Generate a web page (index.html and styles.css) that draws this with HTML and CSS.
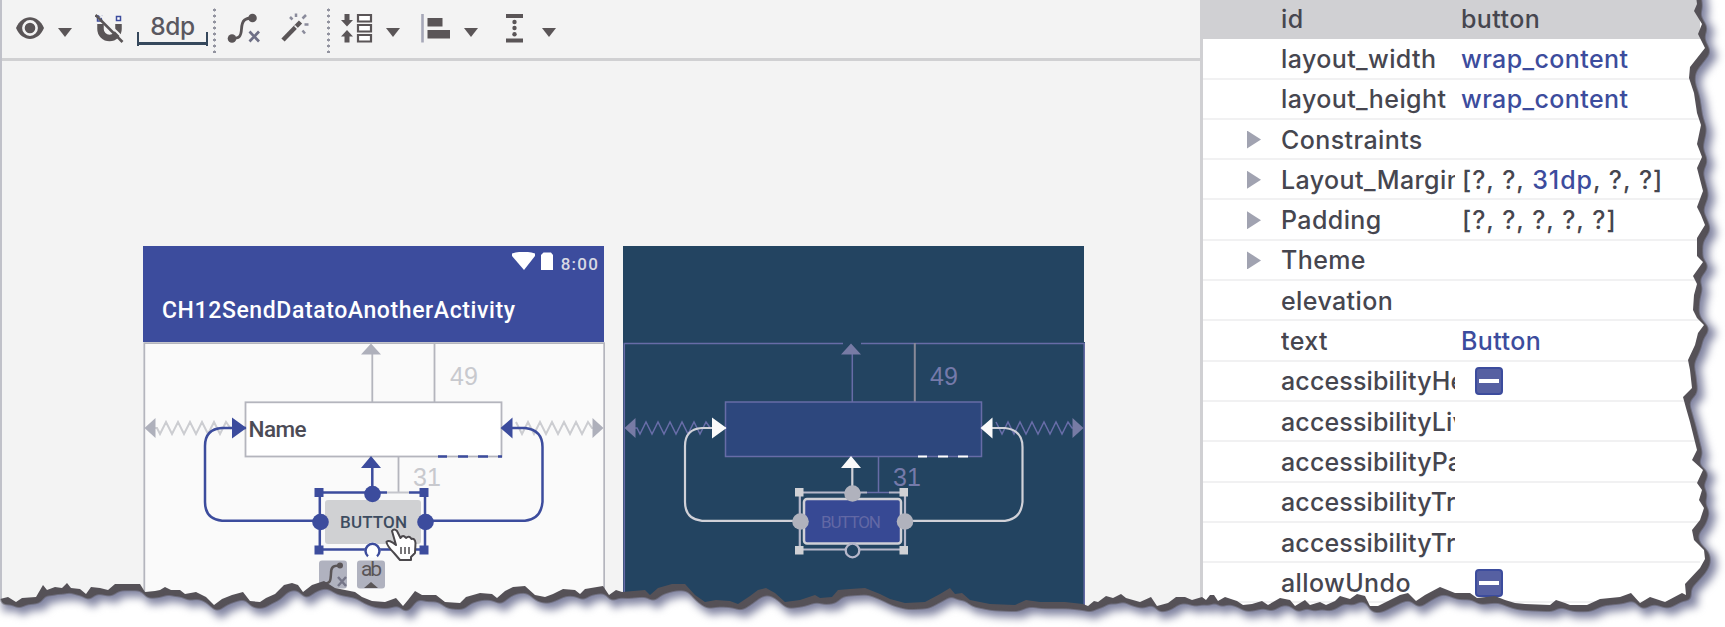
FILE: index.html
```html
<!DOCTYPE html>
<html lang="en">
<head>
<meta charset="utf-8">
<title>Layout Editor</title>
<link rel="stylesheet" href="styles.css">
</head>
<body>
<div class="app">
  <main class="editor">
    <div class="toolbar">
      <svg class="ic eye" width="28" height="24" viewBox="16 16 28 24"><path d="M16 28C22 13.500 38 13.500 44 28C38 42.500 22 42.500 16 28Z" fill="#5a5557"/><circle cx="30" cy="28" r="6.600" fill="none" stroke="#f3f3f3" stroke-width="2.600"/><circle cx="30" cy="28" r="3.800" fill="#5a5557"/></svg>
      <svg class="ic dd dd-eye" width="14" height="9" viewBox="0 0 14 9"><path d="M0 0H14L7 9Z"/></svg>
      <svg class="ic magnet" width="29" height="29" viewBox="95 14 29 29"><path d="M100.500 24V29A9 9 0 0 0 118.500 29V24" fill="none" stroke="#5a5557" stroke-width="6.500"/><path d="M97.500 16h4v5h-4zM116.500 16.500h4v4h-4z" fill="#fff" stroke="#3c4c9d" stroke-width="1.500"/><path d="M97 12L125 40" stroke="#f3f3f3" stroke-width="2"/><path d="M95.500 15L122.500 42" stroke="#5a5557" stroke-width="2.600"/></svg>
      <div class="dp"><span>8dp</span></div>
      <i class="dots"></i>
      <svg class="ic curve" width="34" height="30" viewBox="227 13 34 30"><path d="M232 38.500C239 38.500 241 37 241.500 29C242 20 245 18 253 18" fill="none" stroke="#5a5557" stroke-width="2.800"/><circle cx="232" cy="38.500" r="4.300" fill="#5a5557"/><circle cx="252.500" cy="18" r="4.300" fill="#5a5557"/><path d="M249.500 31.500L259 41.500M259 31.500L249.500 41.500" stroke="#6f7086" stroke-width="2.700"/></svg>
      <svg class="ic wand" width="30" height="30" viewBox="280 13 30 30"><path d="M283 40L300.500 22" stroke="#5a5557" stroke-width="4.500"/><path d="M294.500 25.500L298 29" stroke="#f3f3f3" stroke-width="1.500"/><path d="M290 17l2.500 2.500M296 13.500v3.500M306 15l-3.500 3.500M304.500 24.500h4M302.500 30.500l2.500 3" stroke="#8a8b9b" stroke-width="2.500"/></svg>
      <i class="dots dots-2"></i>
      <svg class="ic stack" width="32" height="30" viewBox="341 13 32 30"><path d="M344.500 14h5v6h3.500l-6 6.500-6-6.500h3.500zM344.500 42.500h5v-6h3.500l-6-6.500-6 6.500h3.500z" fill="#5a5557"/><path d="M358 15h13v6.500h-13zM358 25h13v6.500h-13zM358 35h13v6.500h-13z" fill="#fff" stroke="#5a5557" stroke-width="2.200"/></svg>
      <svg class="ic dd dd-a" width="14" height="9" viewBox="0 0 14 9"><path d="M0 0H14L7 9Z"/></svg>
      <svg class="ic align" width="29" height="29" viewBox="421 14 29 29"><path d="M422.500 14v28.500" stroke="#a6a8b8" stroke-width="2.600"/><path d="M427.500 18h15v8.500h-15zM427.500 30h22.500v8.500h-22.500z" fill="#5a5557"/></svg>
      <svg class="ic dd dd-b" width="14" height="9" viewBox="0 0 14 9"><path d="M0 0H14L7 9Z"/></svg>
      <svg class="ic guide" width="18" height="29" viewBox="506 14 18 29"><path d="M506 16h17M506 40.500h17" stroke="#5a5557" stroke-width="4"/><g fill="#5a5557"><circle cx="514.500" cy="22" r="2.200"/><circle cx="514.500" cy="28" r="2.200"/><circle cx="514.500" cy="34.200" r="2.200"/></g></svg>
      <svg class="ic dd dd-c" width="14" height="9" viewBox="0 0 14 9"><path d="M0 0H14L7 9Z"/></svg>
    </div>
    <div class="canvas">
      <section class="screen">
        <header class="appbar">
          <div class="status">
            <svg width="42" height="19" viewBox="512 252 42 19"><path d="M512 253.500Q523.500 250 535 253.500V256L524 270L512 256Z" fill="#fff"/><path d="M541 270V255L543.500 252.500H551L553 255V270Z" fill="#fff"/></svg>
            <span>8:00</span>
          </div>
          <h1>CH12SendDatatoAnotherActivity</h1>
        </header>
        <svg class="surface" width="462" height="285" viewBox="143 342 462 285">
          <rect x="143" y="342" width="462" height="285" fill="#fafafa"/>
          <g fill="none" stroke="#b4b5bd" stroke-width="1.800">
            <path d="M144.300 627V343.200H604.200V627"/>
            <path d="M372.300 350V402M434.500 343V402M398.500 457V492"/>
            <rect x="245.500" y="402.300" width="256" height="54.200" fill="#fff"/>
            <path d="M150 428H157l3 6 6-12 6 12 6-12 6 12 6-12 6 12 6-12 6 12 6-12 6 12 6-12 5 7M598 428h-6l-4-6-6 12-6-12-6 12-6-12-6 12-6-12-6 12-6-12-6 12-6-12-6 12-6-12" stroke="#cccdd1" stroke-width="2"/>
          </g>
          <path d="M371 343.500l10 11h-20zM144.500 428l11-10v20zM603.500 428l-11-10v20z" fill="#aeb0bb"/>
          <g class="num light"><text x="450" y="385">49</text><text x="413" y="486">31</text></g>
          <text class="name" x="248.500" y="437" textLength="58">Name</text>
          <rect x="325" y="500" width="96" height="44" rx="3" fill="#d0d1d3"/>
          <text class="btn" x="340" y="528" textLength="67">BUTTON</text>
          <g fill="none" stroke="#3c4c9d" stroke-width="2.500">
            <path d="M246 428H222Q205 429 205 446V502Q205 519 222 520.800H320M503 428H525Q542.500 430 542.500 447V502Q541 519 525 520.800H426"/>
            <path d="M372.300 465V492M319.800 492.500H387M409 492.500H425V549.500H319.800V492.500"/>
            <path d="M438 456.500h9M458 456.500h10M478 456.500h10M498 456.500h4"/>
          </g>
          <path d="M387 492.500h22" stroke="#c5c6cc" stroke-width="2"/>
          <path d="M246.500 428l-14.500-10.500v21zM500.500 428l12-10.500v21zM371 456l10 12h-20z" fill="#3c4c9d"/>
          <g fill="#3c4c9d"><circle cx="372.500" cy="494" r="8.300"/><circle cx="320.500" cy="522" r="8.300"/><circle cx="425.500" cy="522" r="8.300"/>
          <rect x="314.500" y="488" width="9" height="9"/><rect x="419.500" y="488" width="9" height="9"/><rect x="314.500" y="545.500" width="9" height="9"/><rect x="419.500" y="545.500" width="9" height="9"/></g>
          <circle cx="372.500" cy="550" r="7.800" fill="#fff"/><path d="M368 556.200A7 7 0 1 1 377 556.200" fill="none" stroke="#3c4c9d" stroke-width="2.500"/>
          <rect x="319" y="560.500" width="28" height="28" rx="3" fill="#b0b2bf"/><rect x="357" y="560.500" width="28" height="28" rx="3" fill="#b0b2bf"/>
          <path d="M324 583.500C331 583.500 330.500 580 331 573.500C331 567 333 565.500 340 565.500" fill="none" stroke="#5a5557" stroke-width="2.500"/><circle cx="340" cy="565.500" r="3" fill="#5a5557"/><path d="M338 577l8 9M346 577l-8 9" stroke="#747587" stroke-width="2.400"/>
          <text class="ab" x="361" y="576" textLength="21">ab</text><path d="M371 582l7 6h-14z" fill="#5a5557"/>
          <path d="M392 531Q394 528 397 531L400.500 538Q403 534 406 538Q409 535 411.500 539Q415 538 415.500 543L415 553L411 557V560H400L394 553Q387 546 386.500 542Q389 539 396 545Z" fill="#fff" stroke="#4b484c" stroke-width="2" stroke-linejoin="round"/><path d="M401 547v7M405 547v7M409 547v7" stroke="#4b484c" stroke-width="1.500"/>
        </svg>
      </section>
      <section class="screen blueprint">
        <header class="appbar"></header>
        <svg class="surface" width="462" height="285" viewBox="143 342 462 285">
          <rect x="143" y="342" width="462" height="285" fill="#234461"/>
          <g fill="none" stroke="#676ca7" stroke-width="1.500">
            <path d="M144.300 627V343.500H363M381 343.500H604.200V627"/>
            <path d="M372.300 350V402M398.500 457V492M387 492.500h22"/><path d="M434.800 343V402" stroke="#888998" stroke-width="2"/>
            <rect x="245.500" y="402" width="256" height="54.500" fill="#2d477d"/>
            <path d="M150 428H157l3 6 6-12 6 12 6-12 6 12 6-12 6 12 6-12 6 12 6-12 6 12 6-12 5 7M598 428h-6l-4-6-6 12-6-12-6 12-6-12-6 12-6-12-6 12-6-12-6 12-6-12-6 12-6-12"/>
          </g>
          <path d="M371 343.500l10 11h-20zM144.500 428l11-10v20zM603.500 428l-11-10v20z" fill="#777ba5"/>
          <g class="num blue"><text x="450" y="385">49</text><text x="413" y="486">31</text></g>
          <rect x="324" y="499" width="97" height="44.500" rx="3" fill="#374994" stroke="#d0d0d6" stroke-width="2.500"/>
          <text class="btn faint" x="341" y="528" textLength="60">BUTTON</text>
          <g fill="none" stroke="#d0d1d8" stroke-width="2.200">
            <path d="M246 428H222Q205 429 205 446V502Q205 519 222 520.800H320M503 428H525Q542.500 430 542.500 447V502Q541 519 525 520.800H426"/>
            <path d="M372.300 465V492"/><path d="M319.800 492.500H387M409 492.500H425V549.500H319.800V492.500" stroke="#b6b7ca"/>
            <path d="M438 456.500h9M458 456.500h10M478 456.500h10" stroke="#fff"/>
          </g>
          <path d="M246.500 428l-14.500-10.500v21zM500.500 428l12-10.500v21zM371 456l10 12h-20z" fill="#fafafa"/>
          <g fill="#b0b2bd"><circle cx="372.500" cy="493.500" r="8.300"/><circle cx="320.500" cy="521.500" r="8.300"/><circle cx="425" cy="521.500" r="8.300"/></g>
          <g fill="#d0d1d5"><rect x="315" y="488" width="8.500" height="8.500"/><rect x="419.500" y="488" width="8.500" height="8.500"/><rect x="315" y="546" width="8.500" height="8.500"/><rect x="419.500" y="546" width="8.500" height="8.500"/></g>
          <circle cx="372.500" cy="550.500" r="6.800" fill="#234461" stroke="#b6b7ca" stroke-width="2.300"/>
        </svg>
      </section>
    </div>
  </main>
  <aside class="props">
    <div class="row head"><b></b><span class="key">id</span><span class="val">button</span></div>
    <div class="row"><b></b><span class="key">layout_width</span><span class="val set">wrap_content</span></div>
    <div class="row"><b></b><span class="key">layout_height</span><span class="val set">wrap_content</span></div>
    <div class="row"><b class="tri"></b><span class="key">Constraints</span></div>
    <div class="row"><b class="tri"></b><span class="key">Layout_Margin</span><span class="val list">[?, ?, <em>31dp</em>, ?, ?]</span></div>
    <div class="row"><b class="tri"></b><span class="key">Padding</span><span class="val list">[?, ?, ?, ?, ?]</span></div>
    <div class="row"><b class="tri"></b><span class="key">Theme</span></div>
    <div class="row"><b></b><span class="key">elevation</span></div>
    <div class="row"><b></b><span class="key">text</span><span class="val set">Button</span></div>
    <div class="row"><b></b><span class="key tight">accessibilityHeading</span><span class="val"><i class="box"></i></span></div>
    <div class="row"><b></b><span class="key tight">accessibilityLiveRegion</span></div>
    <div class="row"><b></b><span class="key tight">accessibilityPaneTitle</span></div>
    <div class="row"><b></b><span class="key tight">accessibilityTraversal</span></div>
    <div class="row"><b></b><span class="key tight">accessibilityTraversal</span></div>
    <div class="row"><b></b><span class="key">allowUndo</span><span class="val"><i class="box"></i></span></div>
  </aside>
</div>
<svg class="torn" width="1725" height="627" viewBox="0 0 1725 627">
  <defs>
    <path id="edge" d="M0 -20V599L8 597L16 602L22 598L36 597L43 585L47 590L55 587L62 588L67 583L71 588L80 589L86 594L91 587L100 588L108 590L115 584L140 584L145 592L155 591L160 590L165 587L171 590L180 590L185 594L196 592L206 597L214 605L222 599L232 595L243 592L250 601L260 602L266 598L275 594L284 585L292 583L298 585L303 592L312 585L324 581L335 588L345 590L355 592L362 597L372 601L385 602L396 598L403 606L408 600L415 591L422 595L436 595L445 602L460 603L466 597L480 593L492 594L497 598L505 591L513 587L525 586L535 595L545 597L553 594L563 589L575 590L580 594L585 589L603 586L609 595L616 590L622 592L645 590L650 595L658 588L672 584L685 584L695 595L705 602L716 600L730 601L738 604L750 596L758 590L766 588L775 593L785 602L800 600L815 595L820 598L832 597L838 590L850 589L865 588L880 594L890 599L905 603L925 602L940 594L950 588L955 594L962 593L970 600L990 604L1015 605L1026 600L1040 602L1065 602L1083 604L1088 606L1094 601L1098 602L1106 596L1113 598L1121 594L1126 598L1140 602L1151 597L1157 606L1168 603L1176 597L1185 597L1192 600L1202 597L1206 600L1210 595L1214 595L1218 601L1225 597L1237 601L1243 605L1252 604L1262 601L1268 605L1280 598L1290 600L1295 606L1305 600L1310 605L1320 602L1326 605L1335 601L1340 596L1350 599L1357 594L1365 596L1370 606L1378 606L1390 600L1400 595L1408 593L1416 601L1425 595L1440 587L1455 593L1470 593L1477 598L1495 596L1505 600L1515 603L1525 604L1550 605L1556 600L1565 603L1570 605L1587 605L1600 599L1620 597L1631 593L1640 603L1650 597L1665 602L1682 593L1686 595L1685 584L1700 568L1705 559L1704 550L1694 540L1692 530L1700 520L1704 508L1699 500L1702 490L1697 483L1703 470L1692 460L1697 450L1692 430L1690 422L1686 408L1683 397L1692 388L1690 370L1688 360L1695 345L1698 333L1704 325L1697 318L1693 310L1694 295L1697 284L1693 276L1703 262L1697 256L1697 238L1705 225L1701 215L1697 207L1703 191L1697 168L1702 157L1697 144L1701 125L1697 113L1694 93L1689 78L1690 67L1705 48L1698 34L1702 24L1694 11L1697 4L1694 -20Z"/>
    <mask id="outside" maskUnits="userSpaceOnUse" x="0" y="0" width="1725" height="627"><rect width="1725" height="627" fill="#fff"/><use href="#edge" fill="#000"/></mask>
    <filter id="soft" filterUnits="userSpaceOnUse" x="-20" y="-20" width="1780" height="680" color-interpolation-filters="sRGB"><feGaussianBlur stdDeviation="4"/></filter>
    <filter id="smooth" filterUnits="userSpaceOnUse" x="-20" y="-20" width="1780" height="680" color-interpolation-filters="sRGB"><feGaussianBlur stdDeviation="3.500"/><feComponentTransfer><feFuncA type="linear" slope="5" intercept="-1.600"/></feComponentTransfer></filter>
  </defs>
  <g mask="url(#outside)">
    <rect width="1725" height="627" fill="#fff"/>
    <g filter="url(#soft)"><use href="#edge" class="shade"/></g>
    <g filter="url(#smooth)"><use href="#edge" class="rim"/></g>
  </g>
</svg>
</body>
</html>
```
FILE: styles.css
```css
* { box-sizing: border-box; }
body { margin: 0; width: 1725px; height: 627px; overflow: hidden; background: #fff; font-family: Inter, "Liberation Sans", sans-serif; color: #46464f; }
.app { display: flex; height: 627px; }
.editor { width: 1200px; background: #f3f3f3; border-left: 2px solid #c0c1c9; display: flex; flex-direction: column; }
.toolbar { height: 61px; flex: none; border-bottom: 3px solid #d0d0d2; display: flex; align-items: flex-start; padding-left: 14px; }
.ic { display: block; flex: none; margin-top: 14px; }
.eye { margin-top: 16px; }
.dd { fill: #5a5557; margin-top: 28px; }
.dd-eye { margin-left: 14px; }
.magnet { margin-left: 23px; }
.dp { width: 71px; height: 14px; margin: 32px 0 0 13px; border: solid #36485c; border-width: 0 2.5px; position: relative; background: linear-gradient(#36485c, #36485c) 0 10px / 100% 3px no-repeat; }
.dp span { position: absolute; left: 0; right: 0; top: -21px; text-align: center; font-size: 24.5px; line-height: 30px; font-weight: 500; letter-spacing: -.4px; color: #5a5860; }
.dots { width: 3px; height: 46px; margin: 7px 0 0 5px; background: radial-gradient(circle, #92939f 1.300px, transparent 1.800px) 0 0 / 3px 6px; }
.curve { margin: 13px 0 0 11px; }
.wand { margin: 13px 0 0 19px; }
.dots-2 { margin-left: 17px; }
.stack { margin: 13px 0 0 11px; }
.dd-a { margin-left: 13px; }
.align { margin-left: 21px; }
.dd-b { margin-left: 14px; }
.guide { margin-left: 28px; }
.dd-c { margin-left: 18px; }
.canvas { flex: 1; display: flex; gap: 18px; padding: 185px 0 0 141px; overflow: hidden; }
.screen { width: 462px; flex: none; }
.appbar { height: 96px; width: 461px; background: #3c4c9d; color: #fff; font-family: Roboto, sans-serif; }
.blueprint .appbar { background: #234461; }
.status { display: flex; justify-content: flex-end; padding: 6px 5px 0 0; height: 45px; gap: 7px; }
.status span { font-size: 17px; line-height: 25px; letter-spacing: 1.200px; color: #d8d9e4; font-weight: 500; }
.appbar h1 { margin: 0; padding-left: 19px; font-size: 23px; line-height: 40px; font-weight: 500; letter-spacing: .6px; white-space: nowrap; }
.surface { display: block; }
.num { font: 25px "Liberation Sans", sans-serif; }
.light { fill: #c8c9ce; }
.blue { fill: #757aaa; }
.name { font: 500 22.500px Roboto, sans-serif; fill: #4c4b55; }
.btn { font: 500 17px Roboto, sans-serif; fill: #3d4c60; }
.faint { fill: #6268a5; font-weight: 400; }
.ab { font: 21px Roboto, sans-serif; fill: #5a5557; }
.props { width: 500px; background: #fff; border-left: 3px solid #d0d0d3; font-size: 25px; font-weight: 450; margin-top: -1px; }
.row { display: flex; align-items: center; height: 40.300px; border-bottom: 2px solid #f1f1f2; white-space: nowrap; letter-spacing: .4px; padding-top: 1px; }
.row.head { background: #d0d0d3; border-color: #d0d0d3; }
.row b { width: 14px; height: 18px; margin: 0 20px 0 44px; flex: none; }
.tri { background: #a1a3b1; clip-path: polygon(0 0, 100% 50%, 0 100%); }
.key { width: 174px; flex: none; overflow: hidden; line-height: 36px; }
.tight { letter-spacing: .15px; }
.val { margin-left: 6px; line-height: 36px; }
.list { margin-left: 7px; letter-spacing: .95px; }
.set, .val em { color: #3c4c9d; font-style: normal; }
.box { display: block; width: 28px; height: 28px; margin-left: 14px; border-radius: 4px; border: 2px solid #3c4c9d; background: linear-gradient(#fff, #fff) center / 20px 4px no-repeat #5660a2; }
.torn { position: absolute; left: 0; top: 0; }
.rim { fill: #555157; stroke: #555157; stroke-width: 4px; stroke-linejoin: round; transform: translate(3px, 4px); }
.shade { fill: #8083a0; stroke: #8083a0; stroke-width: 10px; stroke-linejoin: round; transform: translate(7px, 8px); }
```
